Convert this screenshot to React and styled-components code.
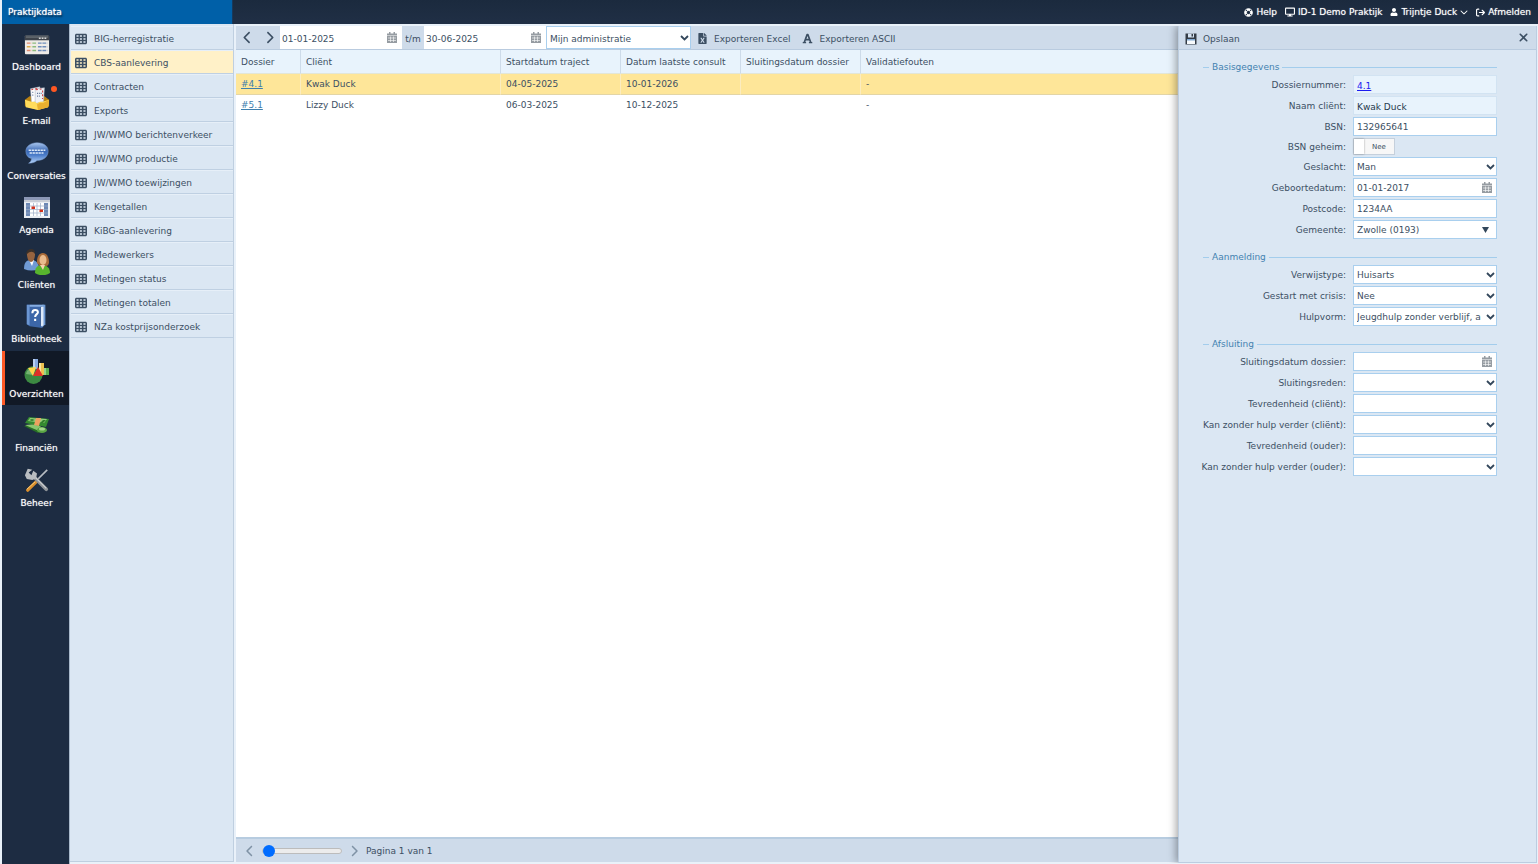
import React from "react";
import styled, { createGlobalStyle } from "styled-components";
import {
  FaLifeRing,
  FaDesktop,
  FaUser,
  FaFileExcel,
  FaFont,
} from "react-icons/fa";
import {
  FaArrowRightFromBracket,
  FaChevronDown,
  FaChevronLeft,
  FaChevronRight,
  FaTableCells,
  FaXmark,
} from "react-icons/fa6";

const GlobalStyle = createGlobalStyle`
  * {
    box-sizing: border-box;
  }
  body {
    margin: 0;
    background: #e9f1f9;
    color: #3c4f63;
    font: 9px/12px "DejaVu Sans", Verdana, sans-serif;
  }
  button, input, select {
    font: inherit;
    color: inherit;
    margin: 0;
  }
  button {
    border: 0;
    padding: 0;
    background: none;
    cursor: pointer;
  }
`;

const Page = styled.div`
  height: 100vh;
  display: flex;
  flex-direction: column;
  padding-left: 2px;
`;

const TopBar = styled.header`
  height: 24px;
  flex: none;
  display: flex;
  align-items: center;
  justify-content: space-between;
  background: linear-gradient(#1b2a3e, #202f45);
  color: #fff;
  text-shadow: 0 0 1px rgba(255, 255, 255, 0.7);
`;

const Brand = styled.div`
  width: 231px;
  height: 24px;
  padding: 6px;
  background: #0060a8;
  border-right: 1px solid #17395c;
  text-shadow: 0 0 1px #fff, 1px 2px 2px rgba(0, 0, 0, 0.7);
`;

const UserNav = styled.nav`
  display: flex;
  gap: 8px;
  padding-right: 7px;
`;

const UserLink = styled.a`
  display: flex;
  align-items: center;
  gap: 3px;
  color: #fff;
  text-decoration: none;
`;

const Body = styled.div`
  flex: 1;
  min-height: 0;
  display: flex;
`;

const Rail = styled.nav`
  width: 68px;
  flex: none;
  background: #1d2c42;
  border-right: 1px solid #a9b9cb;
`;

const RailList = styled.div`
  height: 490px;
  display: flex;
  flex-direction: column;
`;

const RailItem = styled.a`
  flex: 1;
  position: relative;
  display: flex;
  flex-direction: column;
  align-items: center;
  gap: 4px;
  padding: 7px 0 0 2px;
  color: #fff;
  text-decoration: none;
  text-shadow: 0 0 1px rgba(255, 255, 255, 0.7);
  background: ${(p) => (p.$active ? "#111926" : "transparent")};
  box-shadow: ${(p) => (p.$active ? "inset 3px 0 #ff5a26" : "none")};

  svg {
    width: 26px;
    height: 26px;
  }
`;

const Dot = styled.i`
  position: absolute;
  top: 8px;
  right: 12px;
  width: 6px;
  height: 6px;
  border-radius: 50%;
  background: #ff5722;
`;

const Menu = styled.nav`
  width: 164px;
  flex: none;
  margin-bottom: 2px;
  padding: 2px 0 0 1px;
  background: #dbe7f3;
  border: 1px solid #bfcfe0;
  border-width: 0 1px 1px 0;
`;

const MenuItem = styled.a`
  display: flex;
  align-items: center;
  gap: 7px;
  height: 24px;
  padding: 1px 0 0 4px;
  color: inherit;
  text-decoration: none;
  background: ${(p) => (p.$active ? "#fff1c8" : "#dbe7f3")};
  border-top: 1px solid #e6eff8;
  border-bottom: 1px solid #bfd0e2;

  svg {
    width: 12px;
    height: 12px;
  }
`;

const Main = styled.main`
  flex: 1;
  min-width: 0;
  display: flex;
  flex-direction: column;
  margin: 2px 0 2px 2px;
  background: #fff;
`;

const Toolbar = styled.div`
  display: flex;
  align-items: center;
  flex: none;
  height: 24px;
  background: #cedbea;
  border-bottom: 1px solid #b9cbdf;
`;

const NavButton = styled.button`
  width: 22px;
  height: 22px;
  display: grid;
  place-items: center;
`;

const DateBox = styled.span`
  display: flex;
  align-items: center;
  width: ${(p) => p.$width || "100%"};
  height: ${(p) => p.$height || "19px"};
  padding-right: 4px;
  background: #fff;
  border: 1px solid ${(p) => (p.$plain ? "#fff" : "#a9cfee")};

  input {
    flex: 1;
    min-width: 0;
    border: 0;
    padding: ${(p) => (p.$plain ? "2px 0 0 1px" : "0 0 0 3px")};
    outline: 0;
    background: none;
  }
  button {
    display: grid;
    color: #969ca2;
  }
`;

const Between = styled.span`
  width: 22px;
  padding-top: 2px;
  text-align: center;
`;

const ExportButton = styled.button`
  display: flex;
  align-items: center;
  gap: 6px;
  padding-top: 2px;
  margin-left: ${(p) => p.$left || "12px"};
`;

const Table = styled.table`
  width: 100%;
  table-layout: fixed;
  border-collapse: separate;
  border-spacing: 0;

  th {
    height: 24px;
    padding: 0 5px;
    text-align: left;
    font-weight: normal;
    background: #e8f3fc;
    border-right: 1px solid #cddbe9;
    border-bottom: 1px solid #e2e6d8;
    white-space: nowrap;
  }
  td {
    padding: 4px 5px;
    height: 20px;
  }
  th:last-child {
    border-right: 0;
  }
  a {
    color: #3f7fae;
    text-underline-offset: 1px;
  }
`;

const Row = styled.tr`
  td {
    background: ${(p) => (p.$selected ? "#fee699" : "#fff")};
    border-right: 1px solid ${(p) => (p.$selected ? "#fbecc0" : "#fff")};
    border-bottom: 1px solid ${(p) => (p.$selected ? "#e3d5a6" : "#fff")};
  }
`;

const Pager = styled.footer`
  margin-top: auto;
  flex: none;
  height: 25px;
  display: flex;
  align-items: center;
  gap: 6px;
  padding-left: 8px;
  background: #cedbea;
  border-top: 2px solid #b7cce0;

  button {
    display: grid;
    color: #7f92a5;
  }
`;

const Slider = styled.input`
  appearance: none;
  width: 80px;
  height: 12px;
  background: none;

  &::-webkit-slider-runnable-track {
    height: 6px;
    border: 1px solid #bcbcbc;
    border-radius: 3px;
    background: #ececec;
  }
  &::-webkit-slider-thumb {
    appearance: none;
    width: 12px;
    height: 12px;
    margin-top: -4px;
    border-radius: 50%;
    background: #006cff;
  }
`;

const Drawer = styled.aside`
  position: relative;
  width: 359px;
  flex: none;
  margin: 2px 1px 1px 0;
  background: #dbe7f3;
  border: 1px solid #bccde0;
  border-top: 0;
  box-shadow: -2px 0 8px rgba(0, 0, 0, 0.35);
  clip-path: inset(0 0 0 -12px);
`;

const DrawerHead = styled.div`
  height: 24px;
  display: flex;
  align-items: center;
  justify-content: space-between;
  padding: 0 6px;
  background: #cedbea;
  border-bottom: 1px solid #b9cbdf;

  button {
    display: flex;
    align-items: center;
    gap: 6px;
  }
`;

const SaveButton = styled.button`
  padding-top: 2px;
`;

const Form = styled.form`
  display: flex;
  flex-direction: column;
  gap: 12px;
  padding: 11px 39px 0 24px;
`;

const Group = styled.fieldset`
  min-width: 0;
  margin: 0;
  padding: 2px 0 0;
  border: 0;
  border-top: 1px solid #a3cdec;

  legend {
    height: 12px;
    margin-left: 6px;
    padding: 0 3px;
    color: #4382b0;
  }
`;

const Fields = styled.div`
  display: grid;
  grid-template-columns: minmax(0, 1fr);
  gap: 2px;
`;

const Field = styled.div`
  display: grid;
  grid-template-columns: minmax(0, 1fr) 144px;
  column-gap: 7px;
  align-items: center;
  text-align: right;
  white-space: nowrap;

  label {
    display: flex;
    justify-content: flex-end;
  }
`;

const TextInput = styled.input`
  width: 100%;
  height: 19px;
  padding: 0 3px;
  background: #fff;
  border: 1px solid #a9cfee;
  border-radius: 0;
`;

const ReadOnly = styled.output`
  height: 19px;
  padding: 4px 3px 0;
  text-align: left;
  color: #26394d;
  background: #e8f3fc;
  border: 1px solid #d2e3f2;

  a {
    color: #1c1cf0;
  }
`;

const SelectBox = styled.span`
  position: relative;
  display: block;
  width: ${(p) => p.$width || "100%"};

  select {
    appearance: none;
    display: block;
    width: 100%;
    height: ${(p) => p.$height || "19px"};
    padding: ${(p) => (p.$height ? "2px 15px 0 3px" : "0 15px 0 3px")};
    background: #fff;
    border: 1px solid #a9cfee;
    border-radius: 0;
  }
  svg {
    position: absolute;
    right: 2px;
    top: calc(50% - 4px);
    pointer-events: none;
  }
`;

const Toggle = styled.span`
  display: flex;
  align-items: center;
  width: 42px;
  height: 17px;
  background: #f7f7f7;
  border: 1px solid #c5d0dc;

  input {
    appearance: none;
    width: 10px;
    height: 15px;
    background: #fff;
    box-shadow: 0 0 2px rgba(0, 0, 0, 0.35);
  }
  span {
    flex: 1;
    text-align: center;
    font-size: 7px;
  }
`;

const CalendarIcon = () => (
  <svg width="10" height="11" viewBox="0 0 20 22">
    <path fill="currentColor" d="M0 3h4V0h3v3h6V0h3v3h4v4H0zM0 8h20v14H0z" />
    <path stroke="#fff" strokeWidth="1.2" d="M2 12h16M2 17h16M7 9v11M13 9v11" />
  </svg>
);

const SelectArrow = () => (
  <svg width="9" height="8" viewBox="0 0 9 8">
    <path fill="none" stroke="#33475b" strokeWidth="1.8" d="M1 2l3.500 3.500L8 2" />
  </svg>
);

const ComboArrow = () => (
  <svg width="16" height="8" viewBox="0 0 16 8">
    <path fill="#33475b" d="M3 1h7L6.500 7z" />
  </svg>
);

const SaveIcon = () => (
  <svg width="12" height="12" viewBox="0 0 24 24">
    <path fill="#343c46" d="M1 1h22v22H1z" />
    <path fill="#d5e3f2" d="M6 1h12v8H6z" />
    <path fill="#343c46" d="M13 2h3v5h-3z" />
    <path fill="#f7fafc" d="M4 12h16v10H4z" />
    <path fill="#7fa8d2" d="M4 12h16v3H4z" />
  </svg>
);

const DashboardIcon = () => (
  <svg viewBox="-1 -1 28 28">
    <rect x="0" y="4" width="26" height="20" rx="1" fill="#efece8" />
    <path fill="#3f444b" d="M0 4h26v5H0z" />
    <path fill="#7d848b" d="M1 5h24v1H1z" />
    <path fill="#d8d8d8" d="M15 6h2v1.500h-2zM18 6h2v1.500h-2zM21 6h2v1.500h-2z" />
    <g strokeWidth="1.500" strokeDasharray="4 .8">
      <path stroke="#e08b70" d="M2 12h5M2 20h5" />
      <path stroke="#dfac4d" d="M2 16h5" />
      <path stroke="#8dbb7d" d="M8 12h4M8 16h4M8 20h4" />
      <path stroke="#6f8dbb" d="M14 12h10M14 16h10M14 20h10" />
    </g>
  </svg>
);

const MailIcon = () => (
  <svg viewBox="-1 -1 28 28">
    <path fill="#b98213" d="M0 15l5-4h16l5 4v7l-12 4-14-4z" />
    <path fill="#fff" stroke="#a7b2c0" strokeWidth=".6" d="M6 3l10-2 1 15-10 2z" />
    <path fill="#eef1f6" stroke="#a7b2c0" strokeWidth=".6" d="M11 3l10-1-1 15-9 2z" />
    <path stroke="#d04b4b" strokeWidth="1.200" strokeDasharray="2 2" d="M7 4l8-1.500M12 4l8-1M19 5v9" />
    <path stroke="#5a6f95" strokeWidth="1.400" strokeDasharray="1 1" d="M8 7h2M8 10h2M13 8h5M13 11h4" />
    <path fill="#ffdc5c" d="M0 15l7 2h4l2 2 3-2h3l7-2-1 8-11 3-13-3z" />
    <path fill="#e9b030" d="M13 20l3-2h4l6-3-1 8-11 3z" />
  </svg>
);

const ChatIcon = () => (
  <svg viewBox="-1 -1 28 28">
    <defs>
      <linearGradient id="chat" x2="0" y2="1">
        <stop stopColor="#a9c6ee" />
        <stop offset=".4" stopColor="#3a68b4" />
        <stop offset=".6" stopColor="#4a7cc9" />
        <stop offset="1" stopColor="#b5d3f8" />
      </linearGradient>
    </defs>
    <path fill="url(#chat)" stroke="#7598cb" strokeWidth=".6" d="M13 2c8 0 12 4 12 9s-4 10-12 10c-2 2-5 3-9 3 2-1 3-3 3-5-4-1-6-4-6-8 0-5 5-9 12-9z" />
    <path stroke="#dceafa" strokeWidth="1.600" strokeDasharray="2.500 .7" d="M4 10h18M5 13h15" />
  </svg>
);

const AgendaIcon = () => (
  <svg viewBox="0 0 26 26">
    <rect y="3" width="26" height="21" fill="#e9edf2" />
    <path fill="#8b97b5" d="M0 3h26v3H0z" />
    <path fill="#c9ced6" d="M0 6h26v2H0z" />
    <path fill="#6c88b4" d="M2 9h4v13H2zM20 9h4v13h-4z" />
    <path fill="#fff" d="M6 9h14v13H6z" />
    <path stroke="#9caec5" strokeWidth=".7" d="M2 12h22M2 15.500h22M2 19h22M9.500 9v13M13 9v13M16.500 9v13" fill="none" />
    <path fill="#d0321c" d="M7.500 12.500h3.500V15H7.500zM15.500 15.500H19V18h-3.500z" />
  </svg>
);

const ClientsIcon = () => (
  <svg viewBox="0 0 26 26">
    <path fill="#6f9ad4" d="M0 20c0-6 2-9 7-9s8 3 8 9c-5 2-10 2-15 0z" />
    <path fill="#fff" d="M5 11l3 6 2-6z" />
    <path fill="#96633f" d="M3 5c0-5 8-5 8 0 0 5-2 8-4 8s-4-3-4-8z" />
    <path fill="#3a302a" d="M2 6c0-8 10-8 9-1-2-3-5-3-8 0z" />
    <path fill="#58b52e" d="M11 24c0-5 2-8 7-8s8 3 8 8c-4 3-11 3-15 0z" />
    <path fill="#a96b39" d="M13 14C12 1 25 1 25 13c0 2-1 4-3 4h-6z" />
    <ellipse cx="19" cy="11" rx="3.500" ry="5" fill="#e9bb8d" />
    <path fill="#f3d1ae" d="M16 16h5l-2 5z" />
  </svg>
);

const LibraryIcon = () => (
  <svg viewBox="-1 -1 28 28">
    <path fill="#6f9bd5" d="M18 1h4v21l-4 4z" />
    <path fill="#dfeaf7" d="M17 3h3v20l-3 2z" />
    <path fill="#3c66a8" d="M2 1h15v22l2 3-14-2-3-2z" />
    <path fill="#6b96d2" d="M2 1h3v22l-3-1z" />
    <path fill="#86aee2" d="M5 1h16l-3 2H5z" />
    <path fill="none" stroke="#fff" strokeWidth="2.200" d="M8 10c0-5 6-4 6-1 0 2-3 2-3 5M11 16v2.500" />
  </svg>
);

const ChartsIcon = () => (
  <svg viewBox="0 0 26 26">
    <circle cx="9.500" cy="17" r="9" fill="#3c8a42" />
    <path fill="#8dc586" d="M2 16c1-6 7-7 10-6l-3 7z" opacity=".7" />
    <path fill="#89abe1" d="M9 1h5v10H9z" />
    <path fill="#bad1f3" d="M9 1h2v10H9z" />
    <path fill="#eec150" d="M15 5h5v12h-5z" />
    <path fill="#fbe69d" d="M15 5h2v12h-2z" />
    <path fill="#5aad4e" d="M20 10h5v7h-5z" />
    <path fill="#94d48a" d="M20 10h2v7h-2z" />
    <path fill="#ffd64c" d="M4 10l8-1-3 9z" />
    <path fill="#df3029" d="M14 9l5 9H9z" />
  </svg>
);

const MoneyIcon = () => (
  <svg viewBox="0 0 26 26">
    <path fill="#276f25" d="M0 14l12-2 9 5-7 4z" />
    <path fill="#8ac76e" d="M1 13l11-1 7 4-4 3z" />
    <path fill="#348a30" d="M5 5l20 2-3 8-21-4z" />
    <path fill="#95cf7a" d="M6 6l17 1-3 4-16-2z" />
    <path fill="#327e2d" d="M8 7l3 1-3 1-3-1zM19 8h3l-3 3h-3z" />
    <path fill="#eda160" d="M12 6h5l-2 8-5-1z" />
    <ellipse cx="18" cy="18" rx="5" ry="3" fill="#5ba645" />
    <ellipse cx="18" cy="17" rx="3" ry="1.500" fill="#a5d58c" />
  </svg>
);

const ToolsIcon = () => (
  <svg viewBox="-1 -1 28 28">
    <path stroke="#b8bdc3" strokeWidth="1.800" d="M24 2L13 13" />
    <path stroke="#d98e2c" strokeWidth="3.500" strokeLinecap="round" d="M12 15l-9 9" />
    <path stroke="#f9cf7d" strokeWidth="1" d="M11 15l-9 8" />
    <path stroke="#8d9297" strokeWidth="4" strokeLinecap="round" d="M9 9l14 14" />
    <path stroke="#cfd1d4" strokeWidth="1.200" d="M9 8l14 14" />
    <path fill="#b9bdc1" d="M3 1l5 1-4 3 3 3 2-5 4 3-1 5-4 2-6-1-2-4z" />
  </svg>
);

const railItems = [
  { label: "Dashboard", Icon: DashboardIcon },
  { label: "E-mail", Icon: MailIcon, unread: true },
  { label: "Conversaties", Icon: ChatIcon },
  { label: "Agenda", Icon: AgendaIcon },
  { label: "Cliënten", Icon: ClientsIcon },
  { label: "Bibliotheek", Icon: LibraryIcon },
  { label: "Overzichten", Icon: ChartsIcon, active: true },
  { label: "Financiën", Icon: MoneyIcon },
  { label: "Beheer", Icon: ToolsIcon },
];

const menuItems = [
  "BIG-herregistratie",
  "CBS-aanlevering",
  "Contracten",
  "Exports",
  "JW/WMO berichtenverkeer",
  "JW/WMO productie",
  "JW/WMO toewijzingen",
  "Kengetallen",
  "KiBG-aanlevering",
  "Medewerkers",
  "Metingen status",
  "Metingen totalen",
  "NZa kostprijsonderzoek",
];

const rows = [
  { id: "#4.1", client: "Kwak Duck", start: "04-05-2025", last: "10-01-2026" },
  { id: "#5.1", client: "Lizzy Duck", start: "06-03-2025", last: "10-12-2025" },
];

const DateInput = ({ id, value, label, ...box }) => (
  <DateBox {...box}>
    <input id={id} defaultValue={value} aria-label={label} />
    <button type="button" aria-label="Kies datum"><CalendarIcon /></button>
  </DateBox>
);

const LabeledField = ({ id, label, children }) => (
  <Field>
    <label htmlFor={id}>{label}:</label>
    {children}
  </Field>
);

const TextField = ({ id, label, value }) => (
  <LabeledField id={id} label={label}>
    <TextInput id={id} defaultValue={value} />
  </LabeledField>
);

const DateField = ({ id, label, value }) => (
  <LabeledField id={id} label={label}>
    <DateInput id={id} value={value} />
  </LabeledField>
);

const SelectField = ({ id, label, value = "", Arrow = SelectArrow }) => (
  <LabeledField id={id} label={label}>
    <SelectBox>
      <select id={id}><option>{value}</option></select>
      <Arrow />
    </SelectBox>
  </LabeledField>
);

const DossierDrawer = () => (
  <Drawer>
    <DrawerHead>
      <SaveButton type="button"><SaveIcon />Opslaan</SaveButton>
      <button type="button" aria-label="Sluiten"><FaXmark size={13} /></button>
    </DrawerHead>
    <Form>
      <Group>
        <legend>Basisgegevens</legend>
        <Fields>
          <LabeledField id="dossier" label="Dossiernummer">
            <ReadOnly id="dossier"><a href="#4.1">4.1</a></ReadOnly>
          </LabeledField>
          <LabeledField id="naam" label="Naam cliënt">
            <ReadOnly id="naam">Kwak Duck</ReadOnly>
          </LabeledField>
          <TextField id="bsn" label="BSN" value="132965641" />
          <LabeledField id="geheim" label="BSN geheim">
            <Toggle><input id="geheim" type="checkbox" /><span>Nee</span></Toggle>
          </LabeledField>
          <SelectField id="geslacht" label="Geslacht" value="Man" />
          <DateField id="geboorte" label="Geboortedatum" value="01-01-2017" />
          <TextField id="postcode" label="Postcode" value="1234AA" />
          <SelectField id="gemeente" label="Gemeente" value="Zwolle (0193)" Arrow={ComboArrow} />
        </Fields>
      </Group>
      <Group>
        <legend>Aanmelding</legend>
        <Fields>
          <SelectField id="verwijs" label="Verwijstype" value="Huisarts" />
          <SelectField id="crisis" label="Gestart met crisis" value="Nee" />
          <SelectField id="hulpvorm" label="Hulpvorm" value="Jeugdhulp zonder verblijf, ambulant" />
        </Fields>
      </Group>
      <Group>
        <legend>Afsluiting</legend>
        <Fields>
          <DateField id="sluiting" label="Sluitingsdatum dossier" />
          <SelectField id="reden" label="Sluitingsreden" />
          <TextField id="tevredenClient" label="Tevredenheid (cliënt)" />
          <SelectField id="verderClient" label="Kan zonder hulp verder (cliënt)" />
          <TextField id="tevredenOuder" label="Tevredenheid (ouder)" />
          <SelectField id="verderOuder" label="Kan zonder hulp verder (ouder)" />
        </Fields>
      </Group>
    </Form>
  </Drawer>
);

const App = () => (
  <Page>
    <GlobalStyle />
    <TopBar>
      <Brand>Praktijkdata</Brand>
      <UserNav>
        <UserLink href="#help"><FaLifeRing size={9} />Help</UserLink>
        <UserLink href="#praktijk"><FaDesktop size={10} />ID-1 Demo Praktijk</UserLink>
        <UserLink href="#profiel"><FaUser size={8} />Trijntje Duck<FaChevronDown size={8} /></UserLink>
        <UserLink href="#afmelden"><FaArrowRightFromBracket size={9} />Afmelden</UserLink>
      </UserNav>
    </TopBar>
    <Body>
      <Rail>
        <RailList>
          {railItems.map(({ label, Icon, unread, active }) => (
            <RailItem key={label} href={`#${label}`} $active={active}>
              <Icon />
              {label}
              {unread && <Dot />}
            </RailItem>
          ))}
        </RailList>
      </Rail>
      <Menu>
        {menuItems.map((item) => (
          <MenuItem key={item} href={`#${item}`} $active={item === "CBS-aanlevering"}>
            <FaTableCells />
            {item}
          </MenuItem>
        ))}
      </Menu>
      <Main>
        <Toolbar>
          <NavButton aria-label="Vorige periode"><FaChevronLeft size={13} /></NavButton>
          <NavButton aria-label="Volgende periode"><FaChevronRight size={13} /></NavButton>
          <DateInput label="Van" value="01-01-2025" $width="122px" $height="23px" $plain />
          <Between>t/m</Between>
          <DateInput label="Tot en met" value="30-06-2025" $width="122px" $height="23px" $plain />
          <SelectBox $width="145px" $height="23px">
            <select aria-label="Administratie"><option>Mijn administratie</option></select>
            <SelectArrow />
          </SelectBox>
          <ExportButton $left="6px"><FaFileExcel size={11} />Exporteren Excel</ExportButton>
          <ExportButton><FaFont size={11} />Exporteren ASCII</ExportButton>
        </Toolbar>
        <Table>
          <colgroup>
            <col width="65" />
            <col width="200" />
            <col width="120" />
            <col width="120" />
            <col width="120" />
            <col />
          </colgroup>
          <thead>
            <tr>
              <th>Dossier</th>
              <th>Cliënt</th>
              <th>Startdatum traject</th>
              <th>Datum laatste consult</th>
              <th>Sluitingsdatum dossier</th>
              <th>Validatiefouten</th>
            </tr>
          </thead>
          <tbody>
            {rows.map((row, i) => (
              <Row key={row.id} $selected={i === 0}>
                <td><a href={row.id}>{row.id}</a></td>
                <td>{row.client}</td>
                <td>{row.start}</td>
                <td>{row.last}</td>
                <td />
                <td>-</td>
              </Row>
            ))}
          </tbody>
        </Table>
        <Pager>
          <button aria-label="Vorige pagina"><FaChevronLeft size={12} /></button>
          <Slider type="range" min="1" max="2" defaultValue="1" aria-label="Pagina" />
          <button aria-label="Volgende pagina"><FaChevronRight size={12} /></button>
          <span>Pagina 1 van 1</span>
        </Pager>
      </Main>
      <DossierDrawer />
    </Body>
  </Page>
);

export default App;
